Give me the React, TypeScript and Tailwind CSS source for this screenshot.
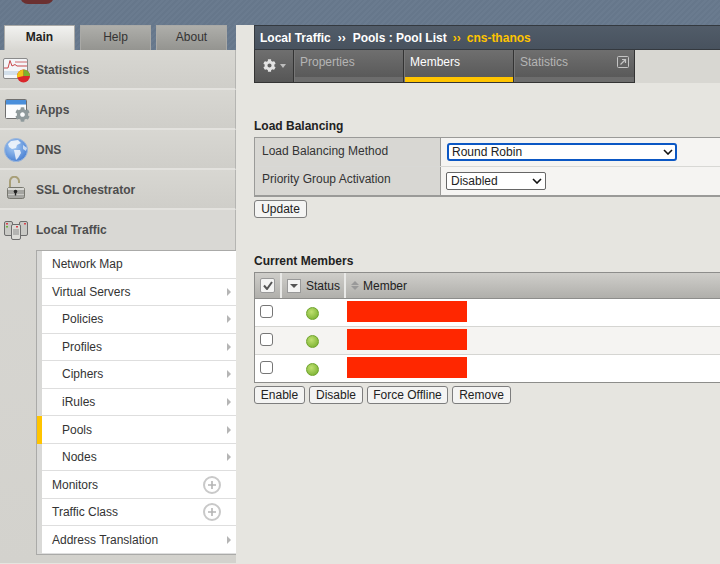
import { FaCog } from 'react-icons/fa'

const FONT = "font-['Liberation_Sans',Arial,sans-serif]"

function StatisticsIcon() {
  return (
    <svg width="32" height="28" viewBox="0 0 32 28">
      <rect x="1.5" y="2.5" width="24" height="20" rx="1.5" fill="#f4f6f8" stroke="#8a8a8a" />
      <rect x="2" y="15" width="23" height="4" fill="#d3dfea" />
      <path d="M2 12 H6 L8 4.5 L10 10 L13 8.5 L15 10 H25" fill="none" stroke="#c9474a" strokeWidth="1" />
      <line x1="13" y1="6" x2="25" y2="6" stroke="#c9474a" strokeWidth="0.8" />
      <circle cx="21.5" cy="20" r="6.5" fill="#d9262a" />
      <path d="M21.5 20 L15.2 21.5 A6.5 6.5 0 0 1 21.5 13.5 Z" fill="#f0c419" />
      <path d="M21.5 20 L21.5 13.5 A6.5 6.5 0 0 1 28 20 Z" fill="#7cb32e" />
    </svg>
  )
}

function IAppsIcon() {
  return (
    <svg width="32" height="28" viewBox="0 0 32 28">
      <rect x="3.5" y="3.5" width="21" height="19" rx="1" fill="#fbfcfd" stroke="#6f6f6f" />
      <rect x="4" y="4" width="20" height="4" fill="#4a8fdb" />
      <line x1="4" y1="8.5" x2="24" y2="8.5" stroke="#9cc0e8" />
    </svg>
  )
}

function GlobeIcon() {
  return (
    <svg width="28" height="28" viewBox="0 0 28 28">
      <defs>
        <radialGradient id="globe" cx="0.4" cy="0.35" r="0.75">
          <stop offset="0" stopColor="#a9cdf5" />
          <stop offset="1" stopColor="#3f78cf" />
        </radialGradient>
      </defs>
      <circle cx="12" cy="14" r="11.5" fill="url(#globe)" stroke="#9db8dc" />
      <path d="M7 5 L14 4 L17 7 L13 9 L12 12 L8 13 L5 11 L4 8 Z" fill="#f2f6fb" opacity="0.9" />
      <path d="M10 14 L16 14 L17 17 L14 22 L12 24 L11 19 Z" fill="#f2f6fb" opacity="0.85" />
      <path d="M19 9 L23 12 L22 15 L19 13 Z" fill="#e3ecf8" opacity="0.8" />
    </svg>
  )
}

function LockIcon() {
  return (
    <svg width="28" height="28" viewBox="0 0 28 28">
      <path d="M6 12 V5.5 A4.5 4.5 0 0 1 15 5 V7" fill="none" stroke="#a89f78" strokeWidth="2" />
      <rect x="3.5" y="11.5" width="17" height="11" rx="2" fill="#a5a5a1" stroke="#77776f" />
      <rect x="4" y="12" width="16" height="2" fill="#d9d9d5" />
      <rect x="4" y="18" width="16" height="1" fill="#c9c9c5" />
      <circle cx="11.5" cy="15.5" r="1.8" fill="#222" />
      <rect x="10.8" y="16" width="1.4" height="3.5" fill="#222" />
    </svg>
  )
}

function ServersIcon() {
  return (
    <svg width="28" height="28" viewBox="0 0 28 28">
      <rect x="0.5" y="5.5" width="8" height="14" rx="1.5" fill="#c9c9c5" stroke="#6d6d6d" />
      <rect x="15.5" y="5.5" width="8" height="14" rx="1.5" fill="#c9c9c5" stroke="#6d6d6d" />
      <rect x="7.5" y="8.5" width="9" height="15" rx="1.5" fill="#dcdcd8" stroke="#6d6d6d" />
      <rect x="2" y="7" width="2" height="1.5" fill="#d8404a" />
      <rect x="2" y="10" width="2" height="1.5" fill="#6cb33f" />
      <rect x="20" y="7" width="2" height="1.5" fill="#d8404a" />
      <rect x="12" y="10" width="2" height="1.5" fill="#d8404a" />
      <path d="M9 14 H15 M9 16 H15 M9 18 H15" stroke="#8b8b8b" />
    </svg>
  )
}

function NavRow({ label, icon, last }: { label: string; icon: React.ReactNode; last?: boolean }) {
  return (
    <div
      className={`relative flex h-10 items-center border-r border-[#b5b5b2] pl-9 text-[12px] font-bold text-[#4d4d4d] ${
        last ? 'bg-[#d9d8d4]' : 'border-b-2 border-b-[#e3e2de] bg-gradient-to-b from-[#d8d7d2] to-[#cfcec9] pt-[2px]'
      }`}
    >
      <span className="absolute left-[2px] top-[6px] flex h-7 w-8 items-center justify-center">{icon}</span>
      {label}
    </div>
  )
}

function MenuRow({
  label,
  indent,
  active,
  plus,
  arrow,
}: {
  label: string
  indent?: boolean
  active?: boolean
  plus?: boolean
  arrow?: boolean
}) {
  return (
    <div className="flex">
      <div className={`w-[5px] ${active ? 'bg-[#ffc400]' : 'bg-[#d9d9d7]'}`} />
      <div
        className={`flex flex-1 items-center justify-between border-b border-[#dedede] bg-white pr-[5px] text-[12px] text-[#333] ${
          indent ? 'pl-5' : 'pl-[10px]'
        }`}
      >
        {label}
        {arrow && <span className="h-0 w-0 border-y-[4px] border-l-[4px] border-y-transparent border-l-[#b5b5b5]" />}
        {plus && (
          <span className="mr-[10px] flex h-[18px] w-[18px] items-center justify-center rounded-full border-2 border-[#c9c9c9] text-[#b5b5b5]">
            <svg width="10" height="10" viewBox="0 0 10 10">
              <path d="M5 1 V9 M1 5 H9" stroke="currentColor" strokeWidth="1.6" />
            </svg>
          </span>
        )}
      </div>
    </div>
  )
}

function TopTab({ label, active }: { label: string; active?: boolean }) {
  return (
    <div
      className={`flex h-[25px] w-[71px] items-center justify-center border-x border-t border-[#a9a9a6] pb-[2px] text-[12px] ${
        active
          ? 'bg-gradient-to-b from-[#f2f2f0] to-[#d8d7d2] font-bold text-[#222]'
          : 'bg-gradient-to-b from-[#aeaeaa] to-[#949490] text-[#333]'
      }`}
    >
      {label}
    </div>
  )
}

function ContentTab({ label, active, width, ext }: { label: string; active?: boolean; width: string; ext?: boolean }) {
  return (
    <div className={`border-l border-[#333] ${width}`}>
      <div className="flex h-full flex-col border-l border-[#777] bg-gradient-to-b from-[#6f6f6f] to-[#565656]">
        <div
          className={`flex flex-1 items-start justify-between px-[5px] pt-[3px] text-[12px] ${
            active ? 'text-white' : 'text-[#b5b5b5]'
          }`}
        >
          {label}
          {ext && (
            <svg width="12" height="12" viewBox="0 0 12 12" className="mt-[3px]">
              <rect x="0.5" y="0.5" width="11" height="11" rx="1" fill="none" stroke="#c4c4c4" />
              <path d="M3.5 8.5 L8 4 M5 3.5 H8.5 V7" fill="none" stroke="#c4c4c4" strokeWidth="1.2" />
            </svg>
          )}
        </div>
        <div className={`h-[5px] ${active ? 'bg-[#ffc400]' : 'bg-[#6d6d6d]'}`} />
      </div>
    </div>
  )
}

function Btn({ label, width }: { label: string; width: string }) {
  return (
    <button
      className={`h-[18px] rounded-[3px] border border-[#7d7d7d] bg-[#f4f4f3] text-[12px] leading-none text-[#222] ${width}`}
    >
      {label}
    </button>
  )
}

function Chevron() {
  return (
    <svg width="10" height="6" viewBox="0 0 10 6" className="pointer-events-none absolute right-[4px] top-[6px]">
      <path d="M1 1 L5 5 L9 1" fill="none" stroke="#111" strokeWidth="1.6" />
    </svg>
  )
}

function MemberRow({ alt, last }: { alt?: boolean; last?: boolean }) {
  return (
    <div className={`flex ${last ? 'h-[27px]' : 'h-[28px] border-b border-[#d5d5d2]'} ${alt ? 'bg-[#f5f4f2]' : 'bg-white'}`}>
      <div className="w-[27px] pl-[5px] pt-[6px]">
        <input
          type="checkbox"
          className="block h-[13px] w-[13px] appearance-none rounded-[3px] border border-[#767676] bg-white"
        />
      </div>
      <div className="flex w-[65px] justify-center pr-[4px] pt-[8px]">
        <span className="h-[13px] w-[13px] rounded-full border border-[#6ea32c] bg-[radial-gradient(circle_at_40%_35%,#bfe070,#70aa28)]" />
      </div>
      <div className="pt-[2px]">
        <div className="h-[21px] w-[120px] bg-[#ff2700]" />
      </div>
    </div>
  )
}

export default function App() {
  const menu = [
    { label: 'Network Map' },
    { label: 'Virtual Servers', arrow: true },
    { label: 'Policies', indent: true, arrow: true },
    { label: 'Profiles', indent: true, arrow: true },
    { label: 'Ciphers', indent: true, arrow: true },
    { label: 'iRules', indent: true, arrow: true },
    { label: 'Pools', indent: true, arrow: true, active: true },
    { label: 'Nodes', indent: true, arrow: true },
    { label: 'Monitors', plus: true },
    { label: 'Traffic Class', plus: true },
    { label: 'Address Translation', arrow: true },
  ]

  return (
    <div className={`relative flex h-[564px] w-[720px] flex-col overflow-hidden bg-[#e6e5e0] ${FONT}`}>
      {/* top banner */}
      <div className="relative h-[25px] bg-[repeating-linear-gradient(135deg,#66778b_0,#66778b_2px,#6a7b8f_2px,#6a7b8f_4px)]">
        <div className="absolute left-[20px] top-[-4px] h-2 w-[34px] rounded-b-full bg-[#6b3030]" />
      </div>

      <div className="flex flex-1">
        {/* left column */}
        <div className="w-[236px]">
          <div className="flex h-[25px] gap-[5px] bg-[repeating-linear-gradient(135deg,#66778b_0,#66778b_2px,#6a7b8f_2px,#6a7b8f_4px)] pl-1">
            <TopTab label="Main" active />
            <TopTab label="Help" />
            <TopTab label="About" />
          </div>
          <div className="h-[513px] bg-gradient-to-b from-[#d9d8d4] to-[#d3d2cd]">
            <NavRow label="Statistics" icon={<StatisticsIcon />} />
            <NavRow
              label="iApps"
              icon={
                <span className="relative block h-7 w-8">
                  <IAppsIcon />
                  <FaCog className="absolute left-[13px] top-[11px] text-[15px] text-[#8f9a9c]" />
                </span>
              }
            />
            <NavRow label="DNS" icon={<GlobeIcon />} />
            <NavRow label="SSL Orchestrator" icon={<LockIcon />} />
            <NavRow label="Local Traffic" icon={<ServersIcon />} last />
            <div className="ml-9 grid auto-rows-[27.55px] border-y border-l border-[#aaaaa8]">
              {menu.map((item) => (
                <MenuRow key={item.label} {...item} />
              ))}
            </div>
          </div>
        </div>

        {/* main column */}
        <div className="flex-1 pl-[18px]">
          <div className="flex h-[25px] items-center border border-r-0 border-[#34393f] bg-gradient-to-b from-[#515c69] to-[#48525e] pl-[5px] text-[12px] font-bold text-white">
            Local Traffic
            <span className="mx-[7px]">››</span>
            Pools : Pool List
            <span className="ml-[6px] text-[#ffc400]">››</span>
            <span className="ml-[6px] text-[#ffc400]">cns-thanos</span>
          </div>
          <div className="flex h-[33px] bg-[#d8d7d2]">
            <div className="flex border border-t-0 border-[#333]">
              <div className="flex w-[38px] items-center justify-center gap-[4px] bg-gradient-to-b from-[#6f6f6f] to-[#565656] pb-[2px]">
                <FaCog className="text-[13px] text-[#e4e4e4]" />
                <span className="mt-[2px] h-0 w-0 border-x-[3.5px] border-t-[4px] border-x-transparent border-t-[#bdbdbd]" />
              </div>
              <ContentTab label="Properties" width="w-[110px]" />
              <ContentTab label="Members" width="w-[110px]" active />
              <ContentTab label="Statistics" width="w-[121px]" ext />
            </div>
          </div>

          <h2 className="mt-[36px] text-[12px] font-bold leading-[14px] text-[#222]">Load Balancing</h2>
          <div className="mt-[4px] border-y border-l border-[#9a9a98] text-[12px] text-[#333]">
            <div className="flex h-[29px] border-b border-[#d8d8d5]">
              <div className="w-[186px] border-r border-[#9a9a98] bg-[#d8d7d3] pl-[7px] pt-[4px]">Load Balancing Method</div>
              <div className="flex-1 bg-[#f5f4f2] pl-[6px] pt-[5px]">
                <div className="relative w-[230px]">
                  <select className="block h-[18px] w-full appearance-none rounded-[3px] border-2 border-[#0b57c4] bg-white pl-[3px] text-[12px] leading-none text-[#222] outline-none">
                    <option>Round Robin</option>
                  </select>
                  <Chevron />
                </div>
              </div>
            </div>
            <div className="flex h-[29px] border-b border-[#9a9a98]">
              <div className="w-[186px] border-r border-[#9a9a98] bg-[#d8d7d3] pl-[7px] pt-[3px]">Priority Group Activation</div>
              <div className="flex-1 bg-[#f5f4f2] pl-[5px] pt-[5px]">
                <div className="relative w-[100px]">
                  <select className="block h-[18px] w-full appearance-none rounded-[2px] border border-[#666] bg-white pl-[4px] text-[12px] leading-none text-[#222] outline-none">
                    <option>Disabled</option>
                  </select>
                  <Chevron />
                </div>
              </div>
            </div>
          </div>
          <div className="mt-[3px] flex">
            <Btn label="Update" width="w-[53px]" />
          </div>

          <h2 className="mt-[36px] text-[12px] font-bold leading-[14px] text-[#222]">Current Members</h2>
          <div className="mt-[4px] border-y border-l border-[#8d8d8b] text-[12px]">
            <div className="flex h-[26px] border-b border-[#8d8d8b] bg-gradient-to-b from-[#cfceca] to-[#b0afab] text-[#222]">
              <div className="flex w-[27px] items-center justify-center border-r-2 border-[#e9e9e7]">
                <span className="flex h-[15px] w-[15px] items-center justify-center rounded-[2px] border border-[#999] bg-[#f4f4f3]">
                  <svg width="10" height="9" viewBox="0 0 10 9">
                    <path d="M1 4.5 L4 8 L9 1" fill="none" stroke="#555" strokeWidth="2" />
                  </svg>
                </span>
              </div>
              <div className="flex w-[64px] items-center gap-[5px] border-r-2 border-[#e9e9e7] pl-[5px]">
                <span className="flex h-[14px] w-[14px] items-center justify-center border border-[#999] bg-[#f4f4f3]">
                  <span className="h-0 w-0 border-x-[4px] border-t-[4px] border-x-transparent border-t-[#555]" />
                </span>
                Status
              </div>
              <div className="flex items-center gap-[4px] pl-[5px]">
                <span className="flex flex-col gap-px">
                  <span className="h-0 w-0 border-x-[4px] border-b-[4px] border-x-transparent border-b-[#999]" />
                  <span className="h-0 w-0 border-x-[4px] border-t-[4px] border-x-transparent border-t-[#999]" />
                </span>
                Member
              </div>
            </div>
            <MemberRow />
            <MemberRow alt />
            <MemberRow last />
          </div>
          <div className="mt-[3px] flex gap-[4px]">
            <Btn label="Enable" width="w-[51px]" />
            <Btn label="Disable" width="w-[54px]" />
            <Btn label="Force Offline" width="w-[81px]" />
            <Btn label="Remove" width="w-[59px]" />
          </div>
        </div>
      </div>
    </div>
  )
}
